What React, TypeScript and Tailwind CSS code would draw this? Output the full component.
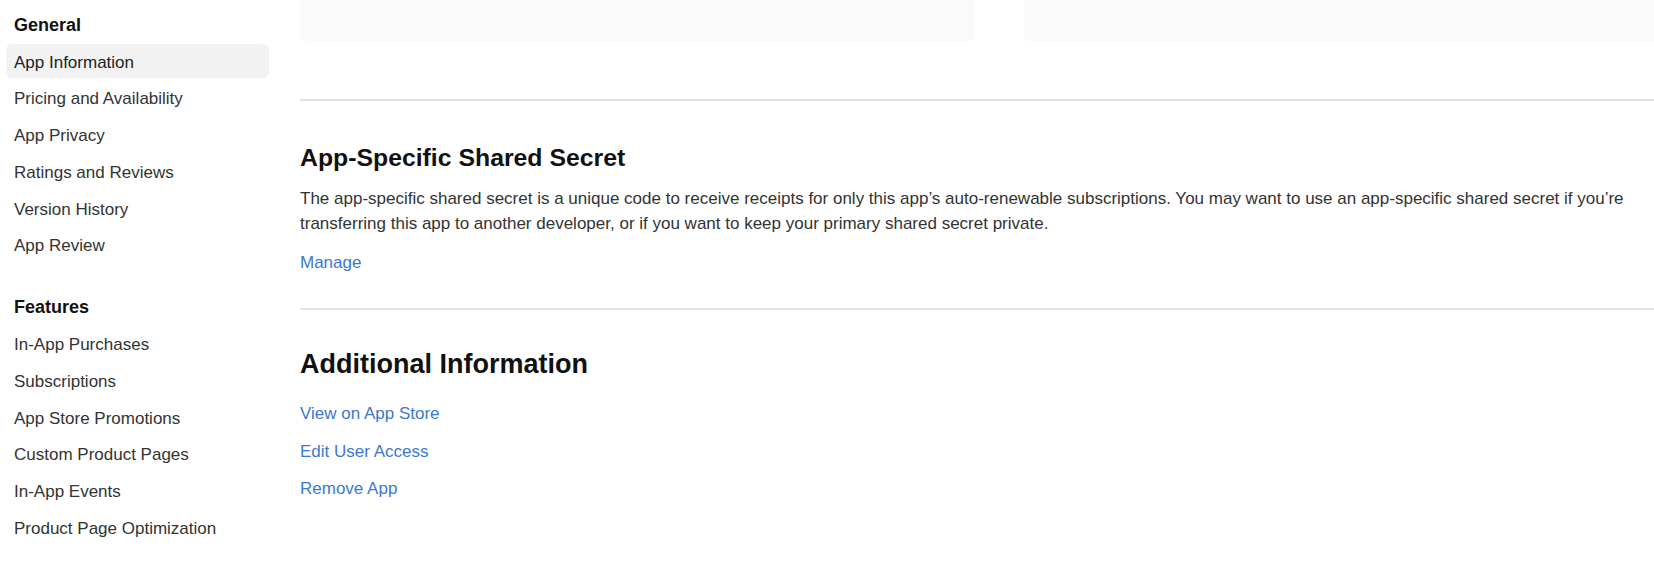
import React from "react";

const generalItems = [
  "App Information",
  "Pricing and Availability",
  "App Privacy",
  "Ratings and Reviews",
  "Version History",
  "App Review",
];

const featureItems = [
  "In-App Purchases",
  "Subscriptions",
  "App Store Promotions",
  "Custom Product Pages",
  "In-App Events",
  "Product Page Optimization",
];

const NavGroup: React.FC<{ title: string; items: string[]; active?: string }> = ({
  title,
  items,
  active,
}) => (
  <div>
    <h3 className="px-[8px] text-[18px] leading-[24px] font-semibold text-[#111]">{title}</h3>
    <ul className="mt-[7px] flex flex-col gap-[2.7px]">
      {items.map((item) => (
        <li
          key={item}
          className={
            item === active
              ? "flex h-[34px] items-center rounded-[6px] bg-[#f2f2f2] px-[8px] pt-[3px] text-[17px] text-[#222]"
              : "flex h-[34px] items-center rounded-[6px] px-[8px] pt-[3px] text-[17px] text-[#333]"
          }
        >
          {item}
        </li>
      ))}
    </ul>
  </div>
);

export default function App() {
  return (
    <div
      className="flex h-[561px] w-[1654px] overflow-hidden bg-white"
      style={{ fontFamily: '"Liberation Sans", Arial, sans-serif' }}
    >
      <aside className="w-[300px] shrink-0 pl-[6px] pr-[31px] pt-[13px]">
        <div className="flex flex-col gap-[34px]">
          <NavGroup title="General" items={generalItems} active="App Information" />
          <NavGroup title="Features" items={featureItems} />
        </div>
      </aside>

      <main className="w-[1399px] shrink-0">
        <div className="grid grid-cols-2 gap-[49px]">
          <div className="h-[41px] rounded-b-[6px] bg-[#fafafa]" />
          <div className="h-[41px] rounded-b-[6px] bg-[#fafafa]" />
        </div>

        <section className="mt-[58px] border-t-2 border-[#e3e3e3] pt-[42px]">
          <h2 className="text-[24.8px] leading-[30px] font-bold text-[#111]">
            App-Specific Shared Secret
          </h2>
          <p className="mt-[13px] max-w-[1342px] text-[17px] leading-[25px] text-[#333]">
            The app-specific shared secret is a unique code to receive receipts for only this
            app’s auto-renewable subscriptions. You may want to use an app-specific shared secret
            if you’re transferring this app to another developer, or if you want to keep your
            primary shared secret private.
          </p>
          <a className="mt-[14px] block text-[17px] leading-[25px] text-[#3b78d3]" href="#">
            Manage
          </a>
        </section>

        <section className="mt-[33px] border-t-2 border-[#e3e3e3] pt-[39px]">
          <h2 className="text-[27px] leading-[30px] font-bold text-[#111]">
            Additional Information
          </h2>
          <div className="mt-[22px] flex flex-col gap-[12.5px]">
            <a className="block text-[17px] leading-[25px] text-[#3b78d3]" href="#">
              View on App Store
            </a>
            <a className="block text-[17px] leading-[25px] text-[#3b78d3]" href="#">
              Edit User Access
            </a>
            <a className="block text-[17px] leading-[25px] text-[#3b78d3]" href="#">
              Remove App
            </a>
          </div>
        </section>
      </main>
    </div>
  );
}
